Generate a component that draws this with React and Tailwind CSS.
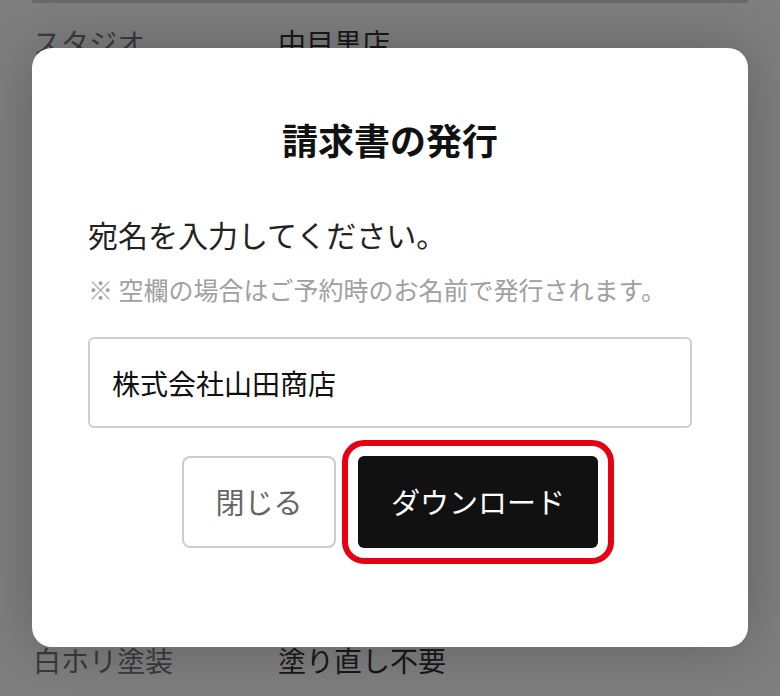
import { useState } from 'react';

const font = { fontFamily: '"Noto Sans CJK JP", "Noto Sans", sans-serif' };

function BackgroundRows() {
  // the page that sits behind the dialog
  return (
    <div className="min-h-[696px] bg-white" style={font}>
      <div className="mx-[32px] h-[3px] bg-[#d4d4d4]" />
      <div className="flex flex-col h-[677px] justify-between pt-[19px]">
        <div className="flex items-center h-[40px] text-[28px] leading-[40px]">
          <span className="w-[278px] pl-[33px] text-[#777]">スタジオ</span>
          <span className="text-[#333]">中目黒店</span>
        </div>
        <div className="flex items-center h-[40px] text-[28px] leading-[40px]">
          <span className="w-[278px] pl-[33px] text-[#777]">白ホリ塗装</span>
          <span className="text-[#333]">塗り直し不要</span>
        </div>
      </div>
    </div>
  );
}

export default function App() {
  const [name, setName] = useState('株式会社山田商店');

  return (
    <div className="relative w-[780px] h-[696px] overflow-hidden">
      <BackgroundRows />

      {/* Overlay + dialog */}
      <div className="absolute inset-0 bg-black/50 flex justify-center items-start pt-[48px]" style={font}>
        <div className="w-[716px] h-[599px] bg-white rounded-[20px] shadow-[0_0_60px_rgba(0,0,0,0.25)] px-[56px] pt-[64px] flex flex-col text-[#222]">
          <h2 className="text-center text-[36px] leading-[54px] font-bold text-[#111]">請求書の発行</h2>

          <p className="mt-[48px] text-[30px] leading-[40px]">宛名を入力してください。</p>
          <p className="mt-[18px] text-[25px] leading-[34px] text-[#a0a0a0]">※ 空欄の場合はご予約時のお名前で発行されます。</p>

          <input
            className="mt-[31px] h-[91px] w-full border-2 border-[#cfcfcf] rounded-[6px] pl-[22px] text-[28px] text-[#111] outline-none"
            value={name}
            onChange={e => setName(e.target.value)}
          />

          <div className="mt-[28px] flex justify-center gap-[22px]">
            <button className="w-[154px] h-[92px] border-2 border-[#cccccc] rounded-[8px] bg-white text-[29px] text-[#666]">
              閉じる
            </button>
            <button className="w-[240px] h-[92px] rounded-[6px] bg-[#111111] text-white text-[29px] outline-[6px] outline-offset-[10px] outline-[#e60012]">
              ダウンロード
            </button>
          </div>
        </div>
      </div>
    </div>
  );
}
